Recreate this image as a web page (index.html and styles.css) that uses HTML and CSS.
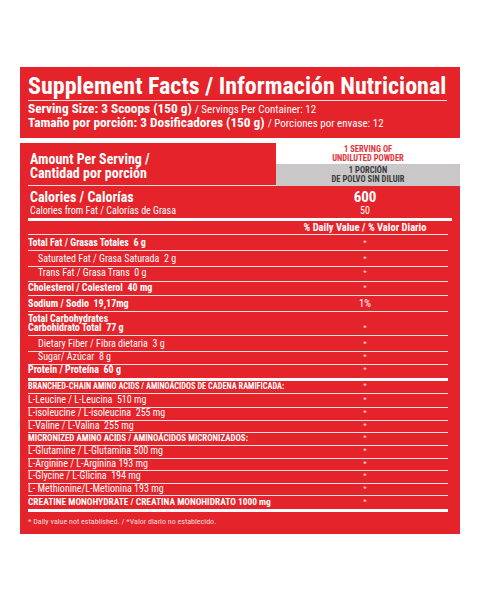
FILE: index.html
```html
<!DOCTYPE html>
<html lang="es">
<head>
    <meta charset="UTF-8">
    <meta name="viewport" content="width=device-width, initial-scale=1.0">
    <title>Supplement Facts / Información Nutricional</title>
    <link rel="stylesheet" href="styles.css">
</head>
<body>
    <main class="label">
        <header class="label-head">
            <h1>Supplement Facts / Información Nutricional</h1>
            <p class="serving"><strong>Serving Size: 3 Scoops (150 g)</strong> <span class="serving-note">/ Servings Per Container: 12</span></p>
            <p class="serving"><strong>Tamaño por porción: 3 Dosificadores (150 g)</strong> <span class="serving-note">/ Porciones por envase: 12</span></p>
        </header>

        <section class="label-table">
            <div class="amount-head">
                <div class="amount-title">Amount Per Serving /<br>Cantidad por porción</div>
                <div class="serving-cell">
                    <div class="serving-en">1 SERVING OF<br>UNDILUTED POWDER</div>
                    <div class="serving-es">1 PORCIÓN<br>DE POLVO SIN DILUIR</div>
                </div>
            </div>

            <div class="facts">
                <div class="calories">
                    <span class="cal-name">Calories / Calorías</span>
                    <span class="cal-value">600</span>
                    <span class="cal-fat">Calories from Fat / Calorías de Grasa</span>
                    <span class="cal-fat-value">50</span>
                </div>

                <div class="row row-dv"><span></span><span class="dv">% Daily Value / % Valor Diario</span></div>

                <div class="row row-lg bold"><span>Total Fat / Grasas Totales&nbsp; 6 g</span><span class="val">*</span></div>
                <div class="row row-lg sub"><span>Saturated Fat / Grasa Saturada&nbsp; 2 g</span><span class="val">*</span></div>
                <div class="row row-md sub"><span>Trans Fat / Grasa Trans&nbsp; 0 g</span><span class="val">*</span></div>
                <div class="row row-md bold"><span>Cholesterol / Colesterol&nbsp; 40 mg</span><span class="val">*</span></div>
                <div class="row row-lg bold"><span>Sodium / Sodio&nbsp; 19,17mg</span><span class="val pct">1%</span></div>
                <div class="row row-carb bold"><span>Total Carbohydrates<br>Carbohidrato Total&nbsp; 77 g</span><span class="val">*</span></div>
                <div class="row row-lg sub"><span>Dietary Fiber / Fibra dietaria&nbsp; 3 g</span><span class="val">*</span></div>
                <div class="row row-xs sub"><span>Sugar/ Azúcar&nbsp; 8 g</span><span class="val">*</span></div>
                <div class="row row-lg row-thick bold"><span>Protein / Proteína&nbsp; 60 g</span><span class="val">*</span></div>

                <div class="row row-sm group"><span>BRANCHED-CHAIN AMINO ACIDS / AMINOÁCIDOS DE CADENA RAMIFICADA:</span><span class="val">*</span></div>
                <div class="row row-md"><span>L-Leucine / L-Leucina&nbsp; 510 mg</span><span class="val">*</span></div>
                <div class="row row-xs"><span>L-isoleucine / L-isoleucina&nbsp; 255 mg</span><span class="val">*</span></div>
                <div class="row row-xs"><span>L-Valine / L-Valina&nbsp; 255 mg</span><span class="val">*</span></div>
                <div class="row row-xs group group-wide"><span>MICRONIZED AMINO ACIDS / AMINOÁCIDOS MICRONIZADOS:</span><span class="val">*</span></div>
                <div class="row row-sm"><span>L-Glutamine / L-Glutamina 500 mg</span><span class="val">*</span></div>
                <div class="row row-xs"><span>L-Arginine / L-Arginina 193 mg</span><span class="val">*</span></div>
                <div class="row row-xs"><span>L-Glycine / L-Glicina&nbsp; 194 mg</span><span class="val">*</span></div>
                <div class="row row-xs"><span>L- Methionine/L-Metionina 193 mg</span><span class="val">*</span></div>
                <div class="row row-lg row-thick creatine"><span>CREATINE MONOHYDRATE / CREATINA MONOHIDRATO 1000 mg</span><span class="val">*</span></div>

                <p class="footnote">* Daily value not established. / *Valor diario no establecido.</p>
            </div>
        </section>
    </main>
</body>
</html>
```

FILE: styles.css
```css
:root {
    --red: #e5232a;
    --line: rgba(255, 255, 255, 0.85);
    --gray: #c9c7c7;
    --ink: #3b3b3b;
}

* {
    box-sizing: border-box;
    margin: 0;
    padding: 0;
}

body {
    font-family: "Roboto Condensed", "Open Sans", sans-serif;
    font-stretch: 75%;
    background-color: #ffffff;
    color: #ffffff;
}

.label {
    width: 440px;
    margin: 67px auto 0;
}

/* top block */
.label-head {
    background-color: var(--red);
    padding: 7px 13px 8px 8px;
}

h1 {
    font-size: 24px;
    line-height: 24px;
    font-weight: 700;
    white-space: nowrap;
    padding-bottom: 2px;
    border-bottom: 1px solid var(--line);
    margin-bottom: 1px;
}

.serving {
    font-size: 13.3px;
    line-height: 13.5px;
    white-space: nowrap;
}

.serving-note {
    font-size: 11px;
    line-height: 12px;
}

/* table block */
.label-table {
    margin-top: 5px;
    background-color: var(--red);
}

.amount-head {
    display: flex;
    height: 43px;
}

.amount-title {
    flex: 1;
    margin-left: 8px;
    padding: 9px 0 0 2px;
    font-size: 14px;
    line-height: 14.4px;
    font-weight: 700;
    border-bottom: 1px solid var(--line);
}

.serving-cell {
    width: 184px;
    display: flex;
    flex-direction: column;
    font-size: 8.5px;
    line-height: 8.6px;
    font-weight: 700;
    text-align: center;
}

.serving-en,
.serving-es {
    display: flex;
    flex-direction: column;
    justify-content: center;
}

.serving-en {
    height: 21px;
    background-color: #ffffff;
    color: #e2343a;
}

.serving-es {
    height: 22px;
    background-color: var(--gray);
    color: var(--ink);
}

.facts {
    padding: 0 12px 7px 8px;
}

.calories {
    display: grid;
    grid-template-columns: minmax(0, 1fr) 166px;
    margin-right: -4px;
    padding: 4px 4px 2px 0;
    border-bottom: 3px solid #ffffff;
}

.cal-name {
    padding-left: 2px;
    font-size: 14px;
    line-height: 15px;
    font-weight: 700;
}

.cal-value {
    text-align: center;
    font-size: 15px;
    line-height: 15px;
    font-weight: 700;
}

.cal-fat {
    padding-left: 2px;
    font-size: 10px;
    line-height: 11px;
}

.cal-fat-value {
    text-align: center;
    font-size: 10px;
    line-height: 11px;
}

/* nutrient rows */
.row {
    display: grid;
    grid-template-columns: minmax(0, 1fr) 166px;
    align-items: end;
    padding-bottom: 2.5px;
    border-bottom: 1px solid var(--line);
    font-size: 10px;
    line-height: 10px;
    white-space: nowrap;
}

.row-dv {
    height: 14px;
    padding-bottom: 1px;
}

.dv {
    text-align: center;
    font-size: 10.5px;
    font-weight: 700;
}

.row-lg { height: 16px; }
.row-md { height: 14.5px; }
.row-sm { height: 13px; }
.row-xs { height: 12.5px; }

.row-carb {
    height: 24px;
    line-height: 9.5px;
}

.row-thick {
    border-bottom-width: 3px;
    border-bottom-color: #ffffff;
}

.bold {
    font-weight: 700;
}

.sub {
    padding-left: 10px;
}

.group {
    font-size: 8.3px;
    font-weight: 700;
}

.group-wide {
    font-size: 8.9px;
}

.creatine {
    font-size: 9.4px;
    font-weight: 700;
}

.val {
    text-align: center;
    font-size: 8px;
    font-weight: 400;
    color: rgba(255, 255, 255, 0.85);
}

.val.pct {
    font-size: 10.5px;
    color: #ffffff;
}

.footnote {
    margin-top: 4.5px;
    font-size: 8px;
    line-height: 10px;
    color: rgba(255, 255, 255, 0.85);
}
```
